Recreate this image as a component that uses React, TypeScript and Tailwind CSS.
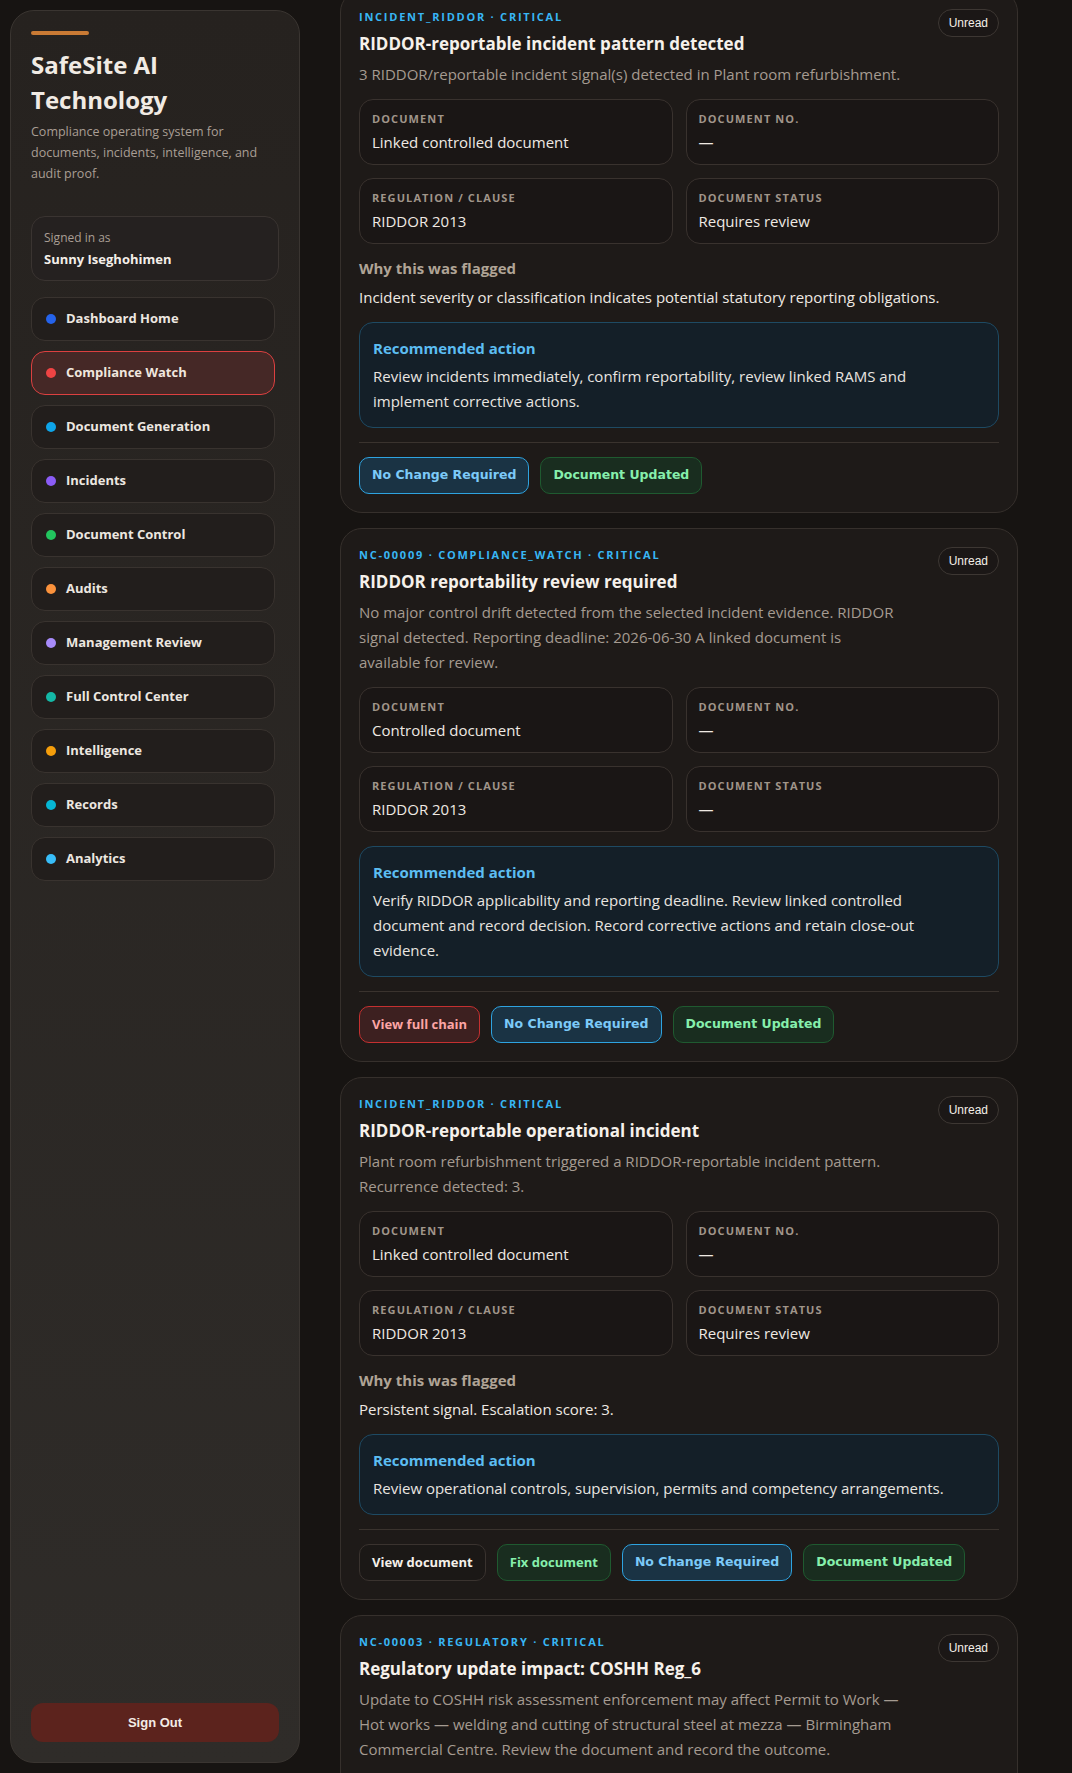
import React from 'react';

type Field = { label: string; value: string };
type Btn = { label: string; kind: 'status-blue' | 'status-green' | 'red' | 'plain' | 'green' };
type Alert = {
  tag: string;
  title: string;
  desc: string;
  fields: Field[];
  why?: string;
  action: string;
  buttons: Btn[];
};

const nav = [
  { label: 'Dashboard Home', dot: 'bg-[#2563eb]' },
  { label: 'Compliance Watch', dot: 'bg-[#ef4444]', active: true },
  { label: 'Document Generation', dot: 'bg-[#0ea5e9]' },
  { label: 'Incidents', dot: 'bg-[#8b5cf6]' },
  { label: 'Document Control', dot: 'bg-[#22c55e]' },
  { label: 'Audits', dot: 'bg-[#fb923c]' },
  { label: 'Management Review', dot: 'bg-[#a78bfa]' },
  { label: 'Full Control Center', dot: 'bg-[#14b8a6]' },
  { label: 'Intelligence', dot: 'bg-[#f59e0b]' },
  { label: 'Records', dot: 'bg-[#06b6d4]' },
  { label: 'Analytics', dot: 'bg-[#38bdf8]' },
];

const docFields = (doc: string, status: string): Field[] => [
  { label: 'Document', value: doc },
  { label: 'Document No.', value: '—' },
  { label: 'Regulation / Clause', value: 'RIDDOR 2013' },
  { label: 'Document Status', value: status },
];

const alerts: Alert[] = [
  {
    tag: 'INCIDENT_RIDDOR · CRITICAL',
    title: 'RIDDOR-reportable incident pattern detected',
    desc: '3 RIDDOR/reportable incident signal(s) detected in Plant room refurbishment.',
    fields: docFields('Linked controlled document', 'Requires review'),
    why: 'Incident severity or classification indicates potential statutory reporting obligations.',
    action:
      'Review incidents immediately, confirm reportability, review linked RAMS and implement corrective actions.',
    buttons: [
      { label: 'No Change Required', kind: 'status-blue' },
      { label: 'Document Updated', kind: 'status-green' },
    ],
  },
  {
    tag: 'NC-00009 · COMPLIANCE_WATCH · CRITICAL',
    title: 'RIDDOR reportability review required',
    desc: 'No major control drift detected from the selected incident evidence. RIDDOR signal detected. Reporting deadline: 2026-06-30 A linked document is available for review.',
    fields: docFields('Controlled document', '—'),
    action:
      'Verify RIDDOR applicability and reporting deadline. Review linked controlled document and record decision. Record corrective actions and retain close-out evidence.',
    buttons: [
      { label: 'View full chain', kind: 'red' },
      { label: 'No Change Required', kind: 'status-blue' },
      { label: 'Document Updated', kind: 'status-green' },
    ],
  },
  {
    tag: 'INCIDENT_RIDDOR · CRITICAL',
    title: 'RIDDOR-reportable operational incident',
    desc: 'Plant room refurbishment triggered a RIDDOR-reportable incident pattern. Recurrence detected: 3.',
    fields: docFields('Linked controlled document', 'Requires review'),
    why: 'Persistent signal. Escalation score: 3.',
    action: 'Review operational controls, supervision, permits and competency arrangements.',
    buttons: [
      { label: 'View document', kind: 'plain' },
      { label: 'Fix document', kind: 'green' },
      { label: 'No Change Required', kind: 'status-blue' },
      { label: 'Document Updated', kind: 'status-green' },
    ],
  },
  {
    tag: 'NC-00003 · REGULATORY · CRITICAL',
    title: 'Regulatory update impact: COSHH Reg_6',
    desc: 'Update to COSHH risk assessment enforcement may affect Permit to Work — Hot works — welding and cutting of structural steel at mezza — Birmingham Commercial Centre. Review the document and record the outcome.',
    fields: [
      { label: 'Document', value: 'Permit to Work — Hot works' },
      { label: 'Document No.', value: '—' },
      { label: 'Regulation / Clause', value: 'COSHH Reg_6' },
      { label: 'Document Status', value: 'Requires review' },
    ],
    action: 'Review the linked document against the regulatory update and record the outcome.',
    buttons: [
      { label: 'View document', kind: 'plain' },
      { label: 'No Change Required', kind: 'status-blue' },
      { label: 'Document Updated', kind: 'status-green' },
    ],
  },
];

const btnClass: Record<Btn['kind'], string> = {
  'status-blue':
    "border-[#2ea3e0] bg-[#1a3344] text-[#7ccaf8] font-['DejaVu_Sans',sans-serif] text-[12.5px]",
  'status-green':
    "border-[#1f5a30] bg-[#192d1f] text-[#86efac] font-['DejaVu_Sans',sans-serif] text-[12.5px]",
  red: 'border-[#c53030] bg-[#3d2020] text-[#fca5a5] text-[13px]',
  plain: 'border-[#3a332f] bg-[#1b1816] text-[#f5f0ea] text-[13px]',
  green: 'border-[#1f5a30] bg-[#192d1f] text-[#86efac] text-[13px]',
};

const AlertCard: React.FC<{ alert: Alert }> = ({ alert }) => (
  <div className="rounded-[22px] border border-[#36302c] bg-[#1e1a18] p-[18px]">
    <div className="flex items-start justify-between gap-4">
      <div className="min-w-0 flex-1">
        <div className="text-[11px] font-bold uppercase leading-4 tracking-[0.16em] text-[#38b6f4]">
          {alert.tag}
        </div>
        <h2 className="mt-1.5 text-[17px] font-bold leading-[26px] text-[#f6f1eb]">{alert.title}</h2>
        <p className="mt-[5px] max-w-[545px] text-[15px] leading-[25px] text-[#a59b91]">{alert.desc}</p>
      </div>
      <span className="flex h-[28px] shrink-0 items-center rounded-full border border-[#3d3733] bg-[#1b1716] px-[10px] font-['Liberation_Sans',sans-serif] text-[12px] text-[#f3eee8]">
        Unread
      </span>
    </div>

    <div className="mt-3 grid grid-cols-2 gap-[13px]">
      {alert.fields.map((f) => (
        <div key={f.label} className="rounded-[14px] border border-[#39322e] bg-[#1a1615] px-3 py-[11px]">
          <div className="text-[11px] font-bold uppercase leading-4 tracking-[0.1em] text-[#a0958a]">
            {f.label}
          </div>
          <div className="mt-1 text-[15px] leading-[22px] text-[#efe9e3]">{f.value}</div>
        </div>
      ))}
    </div>

    {alert.why && (
      <div className="mt-3">
        <div className="text-[15px] font-bold leading-[25px] text-[#b0a496]">Why this was flagged</div>
        <p className="mt-1 text-[15px] leading-[25px] text-[#efe9e3]">{alert.why}</p>
      </div>
    )}

    <div
      className={`${alert.why ? 'mt-3' : 'mt-[14px]'} rounded-[14px] border border-[#1e4a63] bg-[#141f28] px-[13px] py-[13px]`}
    >
      <div className="text-[15px] font-bold leading-[25px] text-[#5cbdf2]">Recommended action</div>
      <p className="mt-[3px] max-w-[583px] text-[15px] leading-[25px] text-[#e9e5e0]">{alert.action}</p>
    </div>

    <div className="mt-[14px] flex flex-wrap gap-[11px] border-t border-[#3a332e] pt-[14px]">
      {alert.buttons.map((b) => (
        <button
          key={b.label}
          className={`h-[37px] rounded-[10px] border px-3 font-bold ${btnClass[b.kind]}`}
        >
          {b.label}
        </button>
      ))}
    </div>
  </div>
);

const Sidebar: React.FC = () => (
  <aside className="m-[10px] flex w-[290px] shrink-0 flex-col rounded-[24px] border border-[#3a3531] bg-gradient-to-b from-[#26221f] to-[#2f2c29] p-5">
    <div className="h-1 w-[58px] rounded-full bg-[#c97a34]" />
    <h1 className="mt-3 text-[24px] font-bold leading-[35px] text-[#f1ebe4]">SafeSite AI Technology</h1>
    <p className="mt-1 text-[12.5px] leading-[21px] text-[#a99e94]">
      Compliance operating system for documents, incidents, intelligence, and audit proof.
    </p>

    <div className="mt-8 rounded-[14px] border border-[#3a3431] bg-[#252120] px-3 py-3">
      <div className="text-[12px] leading-[17px] text-[#a99e94]">Signed in as</div>
      <div className="mt-1 text-[13px] font-bold leading-[18px] text-[#f4efe9]">Sunny Iseghohimen</div>
    </div>

    <nav className="mt-4 flex flex-col gap-[10px] pr-1">
      {nav.map((n) => (
        <div
          key={n.label}
          className={`flex h-[44px] items-center gap-[10px] rounded-[14px] border pl-[14px] text-[13px] font-bold ${
            n.active
              ? 'border-[#dc4040] bg-[#452826] text-[#f0e6df]'
              : 'border-[#39332f] bg-[#221e1c] text-[#ede7e0]'
          }`}
        >
          <span className={`h-[10px] w-[10px] rounded-full ${n.dot}`} />
          {n.label}
        </div>
      ))}
    </nav>

    <div className="flex-1" />

    <button className="h-[39px] rounded-[12px] bg-[#5c231d] font-['Liberation_Sans',sans-serif] text-[13px] font-bold text-[#f3ece6]">
      Sign Out
    </button>
  </aside>
);

export default function App() {
  return (
    <div className="flex h-screen overflow-hidden bg-[#171412] font-['Open_Sans',sans-serif]">
      <Sidebar />
      <main className="flex-1 overflow-y-scroll pl-[30px] pr-[54px] [color-scheme:dark]">
        <div className="-mt-[10px] flex flex-col gap-[15px] pb-10">
          {alerts.map((a, i) => (
            <AlertCard key={i} alert={a} />
          ))}
        </div>
      </main>
    </div>
  );
}
